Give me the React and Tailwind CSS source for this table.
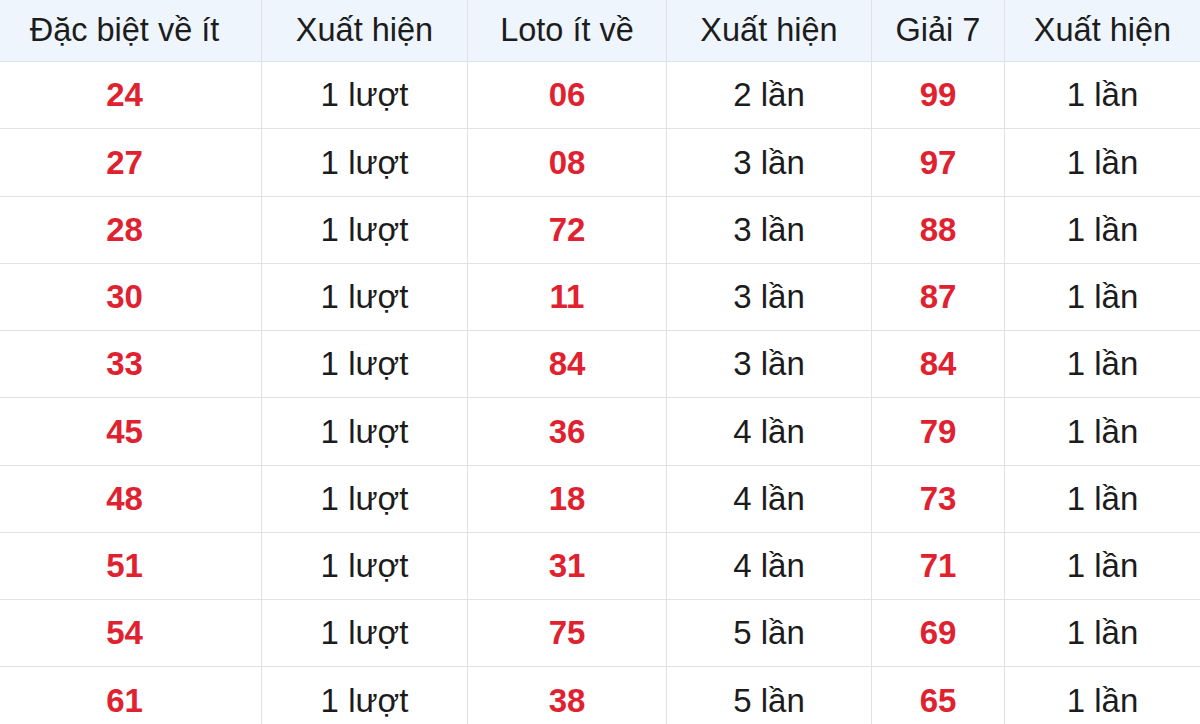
import React from 'react';

// Bảng thống kê: đặc biệt về ít, loto ít về, giải 7
const headers = ['Đặc biệt về ít', 'Xuất hiện', 'Loto ít về', 'Xuất hiện', 'Giải 7', 'Xuất hiện'];

const rows = [
  ['24', '1 lượt', '06', '2 lần', '99', '1 lần'],
  ['27', '1 lượt', '08', '3 lần', '97', '1 lần'],
  ['28', '1 lượt', '72', '3 lần', '88', '1 lần'],
  ['30', '1 lượt', '11', '3 lần', '87', '1 lần'],
  ['33', '1 lượt', '84', '3 lần', '84', '1 lần'],
  ['45', '1 lượt', '36', '4 lần', '79', '1 lần'],
  ['48', '1 lượt', '18', '4 lần', '73', '1 lần'],
  ['51', '1 lượt', '31', '4 lần', '71', '1 lần'],
  ['54', '1 lượt', '75', '5 lần', '69', '1 lần'],
  ['61', '1 lượt', '38', '5 lần', '65', '1 lần'],
];

export default function App() {
  return (
    <div
      className="w-[1200px] h-[724px] overflow-hidden bg-white"
      style={{ fontFamily: '"Liberation Sans", Arial, sans-serif' }}>
      {/* bảng bị cắt lề trái ~12px như ảnh gốc */}
      <div className="-ml-[12px] grid grid-cols-[274px_206px_199px_205px_133px_195px]">
        {headers.map((h, i) => (
          <div
            key={'h' + i}
            className={`h-[62px] flex items-center justify-center bg-[#eef5fd] border-b border-[#dfe3e8] text-[32.5px] text-[#1c1c1c] ${
              i < 5 ? 'border-r' : ''
            }`}>
            {h}
          </div>
        ))}
        {rows.map((r, ri) =>
          r.map((c, ci) => (
            <div
              key={ri + '-' + ci}
              className={`h-[67.25px] flex items-center justify-center border-b border-[#e2e2e2] text-[33px] ${
                ci < 5 ? 'border-r' : ''
              } ${
                ci % 2 === 0
                  ? 'font-bold text-[#e0212f]'
                  : 'text-[#1c1c1c]'
              }`}>
              {c}
            </div>
          ))
        )}
      </div>
    </div>
  );
}
